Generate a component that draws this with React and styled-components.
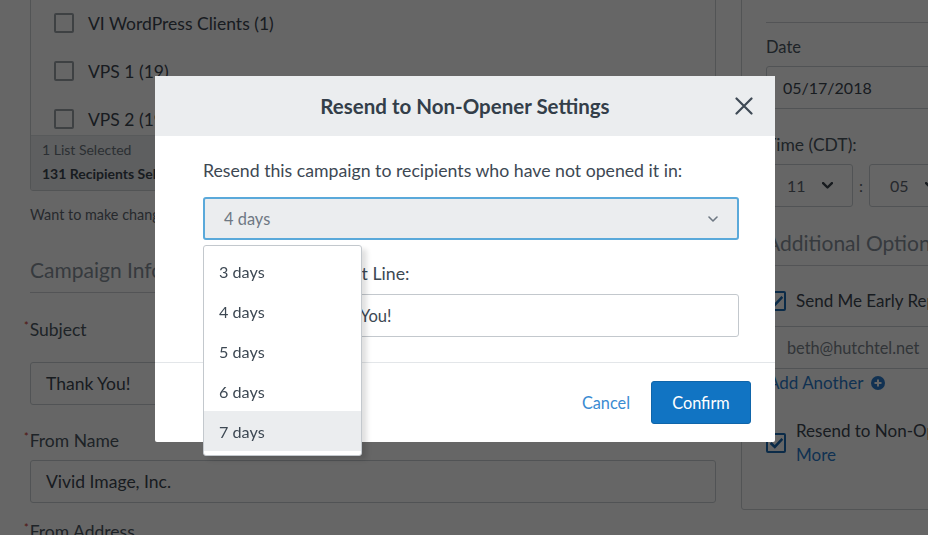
import React from "react";
import styled, { createGlobalStyle } from "styled-components";

const Global = createGlobalStyle`
  html, body { margin: 0; padding: 0; }
  body {
    font-family: Lato, "Noto Sans", "DejaVu Sans", sans-serif;
    background: #ffffff;
    color: #3d4752;
    overflow: hidden;
  }
  * { box-sizing: border-box; }
`;

const Page = styled.div`
  position: relative;
  width: 928px;
  height: 535px;
  overflow: hidden;
`;

const Content = styled.div`
  display: flex;
  align-items: flex-start;
  gap: 25px;
  padding-left: 30px;
  margin-top: -50px;
`;

const LeftCol = styled.div`
  width: 686px;
  flex: none;
  display: flex;
  flex-direction: column;
`;

const RightCol = styled.div`
  width: 320px;
  flex: none;
`;

const ListBox = styled.div`
  border: 1px solid #cdd1d5;
  border-radius: 3px;
  overflow: hidden;
`;

const ListScroll = styled.div`
  height: 184px;
  overflow: hidden;
`;

const ListRow = styled.div`
  height: 48px;
  display: flex;
  align-items: center;
  gap: 14px;
  padding-left: 23px;
  font-size: 17.5px;
  color: #3d4752;
  white-space: nowrap;
`;

const Box = styled.span`
  width: 20px;
  height: 20px;
  flex: none;
  border: 2px solid ${(p) => (p.$checked ? "#1d6db5" : "#9ba2a9")};
  border-radius: 2px;
  background: #fff;
  display: inline-flex;
  align-items: center;
  justify-content: center;
`;

const ListFooter = styled.div`
  background: #ebedef;
  border-top: 1px solid #dde0e3;
  padding: 2px 11px 4px;
  font-size: 14px;
  line-height: 24px;
  white-space: nowrap;
`;

const FooterLine = styled.div`
  color: ${(p) => (p.$strong ? "#3d4752" : "#6d7680")};
  font-weight: ${(p) => (p.$strong ? 700 : 400)};
`;

const Hint = styled.div`
  margin-top: 14px;
  font-size: 14.4px;
  line-height: 20px;
  color: #5f6872;
  white-space: nowrap;
`;

const SectionTitle = styled.div`
  margin-top: ${(p) => p.$mt}px;
  font-size: 21px;
  line-height: 26px;
  font-weight: 400;
  color: #88929c;
  padding-bottom: 9px;
  border-bottom: 1px solid #cfd3d7;
  white-space: nowrap;
`;

const Label = styled.div`
  margin-top: ${(p) => p.$mt}px;
  font-size: ${(p) => (p.$size ? p.$size : 17.5)}px;
  line-height: 22px;
  color: #4d5763;
  white-space: nowrap;
`;

const Req = styled.span`
  color: #c9302c;
  font-size: 11px;
  vertical-align: top;
  line-height: 14px;
  margin-left: -6px;
  margin-right: 1px;
`;

const TextInput = styled.div`
  margin-top: ${(p) => p.$mt}px;
  height: 43px;
  border: 1px solid #cbd0d4;
  border-radius: 3px;
  background: #fff;
  display: flex;
  align-items: center;
  padding: 0 ${(p) => (p.$pad ? p.$pad : 15)}px;
  font-size: ${(p) => (p.$size ? p.$size : 17.5)}px;
  color: ${(p) => (p.$muted ? "#7b848d" : "#3d4752")};
  white-space: nowrap;
  overflow: hidden;
`;

const Panel = styled.div`
  border: 1px solid #cdd1d5;
  border-radius: 3px;
  padding: 0 0 42px 24px;
`;

const Divider = styled.div`
  margin-top: ${(p) => p.$mt}px;
  border-top: 1px solid #cfd3d7;
`;

const TimeRow = styled.div`
  margin-top: 8px;
  display: flex;
  align-items: center;
  gap: 6px;
`;

const TimeSelect = styled.div`
  width: 87px;
  height: 43px;
  flex: none;
  border: 1px solid #cbd0d4;
  border-radius: 3px;
  display: flex;
  align-items: center;
  justify-content: space-between;
  padding: 0 19px 0 20px;
  font-size: 16px;
  color: #5d6670;
`;

const Colon = styled.span`
  font-size: 16px;
  color: #5d6670;
`;

const CheckRow = styled.div`
  margin-top: ${(p) => p.$mt}px;
  display: flex;
  align-items: center;
  gap: 10px;
  font-size: 17px;
  line-height: ${(p) => (p.$lh ? p.$lh : 22)}px;
  color: #3d4752;
  white-space: nowrap;
`;

const CheckText = styled.div`
  display: flex;
  flex-direction: column;
`;

const Link = styled.a`
  color: #2b7ccc;
  text-decoration: none;
  font-size: 17px;
  display: inline-flex;
  align-items: center;
  gap: 8px;
`;

const AddLine = styled.div`
  margin-top: 3px;
  margin-left: 2px;
  line-height: 22px;
`;

/* ---------- modal ---------- */

const Overlay = styled.div`
  position: fixed;
  inset: 0;
  background: rgba(0, 0, 0, 0.6);
  display: flex;
  justify-content: center;
  align-items: flex-start;
  padding-top: 76px;
  padding-left: 2px;
`;

const Modal = styled.div`
  width: 620px;
  background: #fff;
  border-radius: 2px;
`;

const ModalHeader = styled.div`
  height: 60px;
  background: #ebedef;
  display: grid;
  grid-template-columns: 1fr auto 1fr;
  align-items: center;
`;

const ModalTitle = styled.h2`
  grid-column: 2;
  margin: 0;
  font-size: 20.5px;
  font-weight: 700;
  color: #333e49;
  white-space: nowrap;
`;

const CloseBtn = styled.button`
  grid-column: 3;
  justify-self: end;
  margin-right: 22px;
  width: 18px;
  height: 18px;
  padding: 0;
  border: 0;
  background: none;
  display: flex;
  cursor: pointer;
`;

const ModalBody = styled.div`
  padding: 24px 36px 25px 48px;
`;

const Prompt = styled.div`
  font-size: 17.7px;
  line-height: 22px;
  color: #3d4853;
  white-space: nowrap;
`;

const SelectWrap = styled.div`
  position: relative;
  margin-top: 15px;
`;

const SelectBox = styled.div`
  height: 43px;
  background: #ebedef;
  border: 2px solid #5aa9da;
  border-radius: 3px;
  display: flex;
  align-items: center;
  justify-content: space-between;
  padding: 0 19px 0 19px;
  font-size: 16.4px;
  color: #6e7883;
`;

const Menu = styled.ul`
  position: absolute;
  left: 0;
  top: calc(100% + 5px);
  width: 159px;
  margin: 0;
  padding: 5px 0 4px;
  list-style: none;
  background: #fff;
  border: 1px solid #c3c8cd;
  border-radius: 3px;
  box-shadow: 5px 4px 5px rgba(0, 0, 0, 0.12);
  z-index: 2;
`;

const MenuItem = styled.li`
  height: 40px;
  display: flex;
  align-items: center;
  padding-left: 15px;
  font-size: 16.2px;
  color: #3d4853;
  background: ${(p) => (p.$active ? "#ebedef" : "transparent")};
`;

const ModalLabel = styled.div`
  margin-top: 23px;
  font-size: 17.7px;
  line-height: 22px;
  color: #3d4853;
  white-space: nowrap;
`;

const ModalInput = styled.div`
  margin-top: 9px;
  height: 43px;
  border: 1px solid #c3c8cd;
  border-radius: 3px;
  display: flex;
  align-items: center;
  padding: 0 15px;
  font-size: 16.6px;
  color: #3d4853;
  white-space: nowrap;
`;

const ModalFooter = styled.div`
  border-top: 1px solid #e3e6e9;
  padding: 18px 24px 18px;
  display: flex;
  justify-content: flex-end;
  align-items: center;
  gap: 21px;
`;

const CancelBtn = styled.button`
  border: 0;
  background: none;
  padding: 0;
  font-family: inherit;
  font-size: 16.3px;
  color: #3a8bd2;
  cursor: pointer;
`;

const ConfirmBtn = styled.button`
  width: 100px;
  height: 43px;
  border: 1px solid #0f65aa;
  border-radius: 3px;
  background: #1174c3;
  color: #fff;
  font-family: inherit;
  font-size: 16.3px;
  cursor: pointer;
`;

/* ---------- icons ---------- */

const CheckMark = () => (
  <svg width="13" height="11" viewBox="0 0 13 11">
    <path d="M1.5 5.8 L4.8 9 L11.5 1.8" fill="none" stroke="#1d6db5" strokeWidth="2.6" strokeLinecap="square" />
  </svg>
);

const Chevron = ({ color = "#6e7883", w = 10, sw = 1.6 }) => (
  <svg width={w} height={w * 0.6} viewBox="0 0 10 6">
    <polyline points="1,1 5,5 9,1" fill="none" stroke={color} strokeWidth={sw} strokeLinecap="round" strokeLinejoin="round" />
  </svg>
);

const CloseIcon = () => (
  <svg width="18" height="18" viewBox="0 0 18 18">
    <path d="M1.5 1.5 L16.5 16.5 M16.5 1.5 L1.5 16.5" stroke="#3f4a55" strokeWidth="2.2" strokeLinecap="round" />
  </svg>
);

const PlusCircle = () => (
  <svg width="14" height="14" viewBox="0 0 14 14">
    <circle cx="7" cy="7" r="7" fill="#2b7ccc" />
    <path d="M7 3.5 V10.5 M3.5 7 H10.5" stroke="#fff" strokeWidth="2" />
  </svg>
);

const lists = [
  { name: "VI Staff (6)" },
  { name: "VI WordPress Clients (1)" },
  { name: "VPS 1 (19)" },
  { name: "VPS 2 (19)" },
];

const days = ["3 days", "4 days", "5 days", "6 days", "7 days"];

export default function App() {
  return (
    <Page>
      <Global />
      <Content>
        <LeftCol>
          <ListBox>
            <ListScroll>
              {lists.map((l) => (
                <ListRow key={l.name}>
                  <Box />
                  {l.name}
                </ListRow>
              ))}
            </ListScroll>
            <ListFooter>
              <FooterLine>1 List Selected</FooterLine>
              <FooterLine $strong>131 Recipients Selected</FooterLine>
            </ListFooter>
          </ListBox>
          <Hint>Want to make changes to your lists? Manage your lists here.</Hint>
          <SectionTitle $mt={32}>Campaign Information</SectionTitle>
          <Label $mt={26}>
            <Req>*</Req>Subject
          </Label>
          <TextInput $mt={21}>Thank You!</TextInput>
          <Label $mt={25}>
            <Req>*</Req>From Name
          </Label>
          <TextInput $mt={8}>Vivid Image, Inc.</TextInput>
          <Label $mt={18}>
            <Req>*</Req>From Address
          </Label>
        </LeftCol>
        <RightCol>
          <Panel>
            <Divider $mt={71} />
            <Label $mt={13} $size={16.5}>Date</Label>
            <TextInput $mt={8} $pad={16} $size={16}>05/17/2018</TextInput>
            <Label $mt={25} $size={17.5}>Time (CDT):</Label>
            <TimeRow>
              <TimeSelect>
                11
                <Chevron color="#3a434c" w={11} sw={2.2} />
              </TimeSelect>
              <Colon>:</Colon>
              <TimeSelect>
                05
                <Chevron color="#3a434c" w={11} sw={2.2} />
              </TimeSelect>
            </TimeRow>
            <SectionTitle $mt={23}>Additional Options</SectionTitle>
            <CheckRow $mt={24}>
              <Box $checked>
                <CheckMark />
              </Box>
              Send Me Early Reports
            </CheckRow>
            <TextInput $mt={14} $pad={20} $size={16.3} $muted>
              beth@hutchtel.net
            </TextInput>
            <AddLine>
              <Link href="#">
                Add Another <PlusCircle />
              </Link>
            </AddLine>
            <CheckRow $mt={25} $lh={24}>
              <Box $checked>
                <CheckMark />
              </Box>
              <CheckText>
                <span>Resend to Non-Openers</span>
                <Link href="#">More</Link>
              </CheckText>
            </CheckRow>
          </Panel>
        </RightCol>
      </Content>

      <Overlay>
        <Modal>
          <ModalHeader>
            <ModalTitle>Resend to Non-Opener Settings</ModalTitle>
            <CloseBtn aria-label="Close">
              <CloseIcon />
            </CloseBtn>
          </ModalHeader>
          <ModalBody>
            <Prompt>Resend this campaign to recipients who have not opened it in:</Prompt>
            <SelectWrap>
              <SelectBox>
                4 days
                <Chevron />
              </SelectBox>
              <Menu>
                {days.map((d, i) => (
                  <MenuItem key={d} $active={i === 4}>
                    {d}
                  </MenuItem>
                ))}
              </Menu>
            </SelectWrap>
            <ModalLabel>Resend Email Subject Line:</ModalLabel>
            <ModalInput>A Reminder: Thank You!</ModalInput>
          </ModalBody>
          <ModalFooter>
            <CancelBtn>Cancel</CancelBtn>
            <ConfirmBtn>Confirm</ConfirmBtn>
          </ModalFooter>
        </Modal>
      </Overlay>
    </Page>
  );
}
